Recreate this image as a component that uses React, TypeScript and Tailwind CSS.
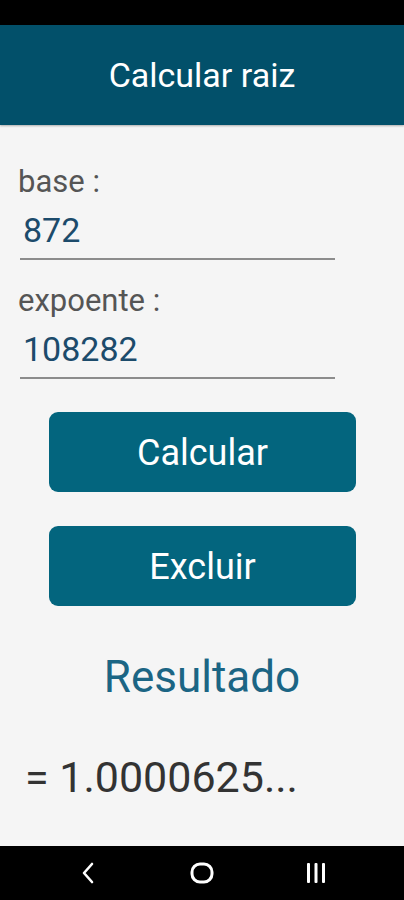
import React from "react";

const font = { fontFamily: "Roboto, 'Noto Sans', sans-serif" };

export default function App() {
  return (
    <div className="w-[404px] h-[900px] flex flex-col bg-[#f5f5f5] overflow-hidden" style={font}>
      <div className="h-[25px] bg-black shrink-0" />
      <div className="h-[100px] shrink-0 bg-[#02506a] flex items-center justify-center shadow-[0_1px_2px_rgba(0,0,0,0.3)]">
        <span className="text-white text-[34px] leading-[40px]">Calcular raiz</span>
      </div>
      <main className="flex-1 flex flex-col pt-[39px]">
        <div className="ml-[18px] text-[31px] leading-[36px] text-[#555555]">base :</div>
        <div className="ml-[20px] mt-[10px] w-[315px] border-b-2 border-[#8c8c8c] pb-[8px] pl-[3px] text-[34px] leading-[40px] text-[#1c4b6b]">
          872
        </div>
        <div className="ml-[18px] mt-[23px] text-[31px] leading-[36px] text-[#555555]">expoente :</div>
        <div className="ml-[20px] mt-[10px] w-[315px] border-b-2 border-[#8c8c8c] pb-[8px] pl-[3px] text-[34px] leading-[40px] text-[#1c4b6b]">
          108282
        </div>
        <button className="ml-[49px] mt-[33px] w-[307px] h-[80px] rounded-[9px] bg-[#03657e] text-white text-[36px] leading-[42px] pt-[2px] flex items-center justify-center">
          Calcular
        </button>
        <button className="ml-[49px] mt-[34px] w-[307px] h-[80px] rounded-[9px] bg-[#03657e] text-white text-[36px] leading-[42px] pt-[2px] flex items-center justify-center">
          Excluir
        </button>
        <div className="mt-[45px] text-center text-[44px] leading-[52px] text-[#1b6584]">Resultado</div>
        <div className="ml-[25px] mt-[48px] text-[43px] leading-[52px] text-[#333333]">= 1.0000625...</div>
      </main>
      <nav className="h-[54px] shrink-0 bg-black flex items-center justify-center">
        <div className="w-[114px] flex justify-center">
          <svg width="14" height="22" viewBox="0 0 14 22" fill="none">
            <polyline points="11,2 3,11 11,20" stroke="white" strokeWidth="2.6" strokeLinecap="round" strokeLinejoin="round" />
          </svg>
        </div>
        <div className="w-[114px] flex justify-center">
          <svg width="24" height="22" viewBox="0 0 24 22" fill="none">
            <rect x="2" y="2" width="20" height="18" rx="8" stroke="white" strokeWidth="3" />
          </svg>
        </div>
        <div className="w-[114px] flex justify-center">
          <svg width="22" height="22" viewBox="0 0 22 22" fill="none">
            <rect x="2" y="1" width="3" height="20" rx="1" fill="white" />
            <rect x="9.5" y="1" width="3" height="20" rx="1" fill="white" />
            <rect x="17" y="1" width="3" height="20" rx="1" fill="white" />
          </svg>
        </div>
      </nav>
    </div>
  );
}
